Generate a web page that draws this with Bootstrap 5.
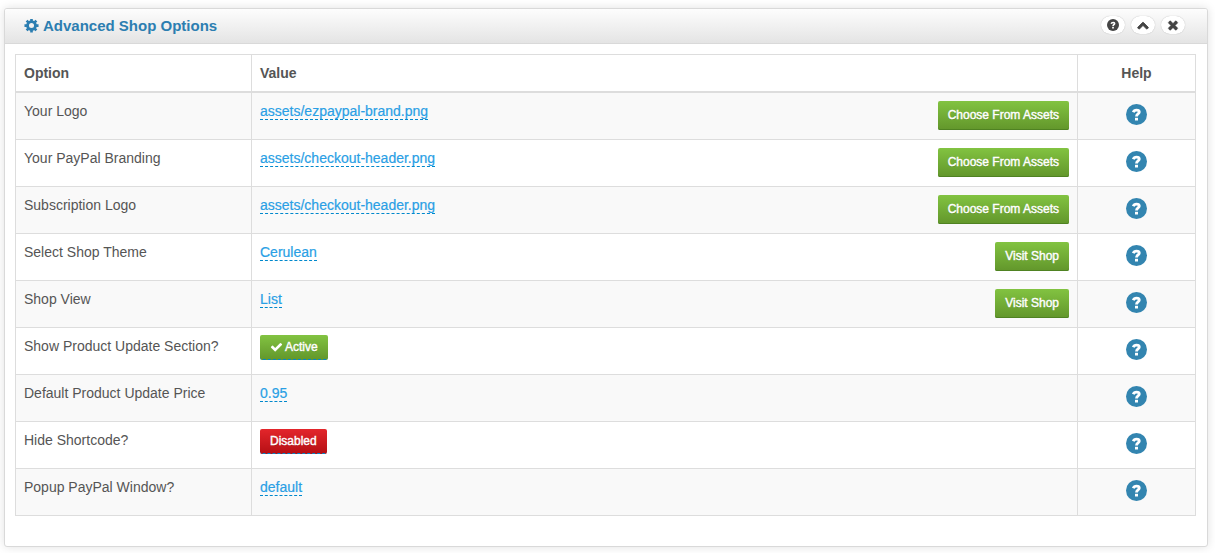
<!DOCTYPE html>
<html lang="en">
<head>
<meta charset="utf-8">
<meta name="viewport" content="width=device-width, initial-scale=1">
<title>Advanced Shop Options</title>
<link href="https://cdn.jsdelivr.net/npm/bootstrap@5.3.0/dist/css/bootstrap.min.css" rel="stylesheet">
<script src="https://cdn.jsdelivr.net/npm/bootstrap@5.3.0/dist/js/bootstrap.bundle.min.js" defer></script>
<style>
body { font-family: "Liberation Sans", Arial, sans-serif; font-size: 14px; line-height: 20px; color: #555; background: #fff; padding: 8px 7px 6px 4px; }
svg { fill: currentColor; display: block; }
.panel { --bs-card-border-color: #d9d9d9; --bs-card-border-radius: 3px; --bs-card-inner-border-radius: 2px; box-shadow: 0 0 10px rgba(0,0,0,.12); color: #555; }
.panel-head { background: linear-gradient(#fdfdfd, #e4e4e4); padding: 7px 22px 7px 19px; border-color: #d9d9d9; }
.panel-title { font-size: 15px; font-weight: bold; line-height: 20px; color: #2c7eb1; gap: 4px; }
.tools { gap: 6px; }
.tool { width: 24px; height: 18px; border: 0; border-radius: 9px; background: #fff; color: #444; padding: 0; box-shadow: 0 0 1px rgba(0,0,0,.3); }
.panel-main { padding: 10px 11px 30px 10px; }
.options { --bs-table-color: #555; --bs-table-striped-color: #555; --bs-table-striped-bg: #f9f9f9; border-color: #ddd; table-layout: fixed; }
.options > :not(caption) > * > * { padding: 8px; vertical-align: top; }
.options thead th { border-bottom-width: 2px; height: 37px; }
.options tbody td { height: 47px; }
.col-option { width: 20%; }
.col-help { width: 10%; }
.edit { color: #2a9fe5; text-decoration: none; border-bottom: 1px dashed #0088cc; line-height: 16px; margin-top: 2px; display: inline-block; -webkit-text-stroke: 0.2px #2a9fe5; }
.act { --bs-btn-font-size: 12px; --bs-btn-line-height: 19px; --bs-btn-border-radius: 2px; --bs-btn-border-width: 0; --bs-btn-padding-x: 10px; --bs-btn-padding-y: 5px; -webkit-text-stroke: 0.4px #fff; --bs-btn-color: #fff; --bs-btn-hover-color: #fff; text-shadow: 0 1px 0 rgba(0,0,0,.15); }
.act-green { background: linear-gradient(#82c341, #62962b); box-shadow: inset 0 -1px #4f8222; }
.act-red { background: linear-gradient(#e3262b, #b50f14); }
.act.state { --bs-btn-line-height: 20px; --bs-btn-padding-y: 2px; border-bottom: 1px dashed #0088cc; box-shadow: none; background-origin: border-box; gap: 2px; }
.state-row { margin-top: -1px; }
.help { border: 0; background: none; padding: 0; margin-top: 3px; color: #3385b0; }
</style>
</head>
<body>
<svg class="d-none">
<symbol id="i-help" viewBox="0 0 21 21"><circle cx="10.500" cy="10.500" r="10.500"/><path d="M7.300 8.200C8.200 5.400 13.300 5.400 13.300 8C13.300 10 10.500 10 10.500 12.500" fill="none" stroke="#fff" stroke-width="2.800"/><path d="M9 13.800h3v2.700h-3z" fill="#fff"/></symbol>
<symbol id="i-up" viewBox="0 0 1792 1792"><path d="M1683 1331l-166 165q-19 19-45 19t-45-19l-531-531-531 531q-19 19-45 19t-45-19l-166-165q-19-19-19-45.500t19-45.500l742-741q19-19 45-19t45 19l742 741q19 19 19 45.500t-19 45.500z" stroke="currentColor" stroke-width="120"/></symbol>
<symbol id="i-close" viewBox="0 0 1792 1792"><path d="M1490 1322q0 40-28 68l-136 136q-28 28-68 28t-68-28l-294-294-294 294q-28 28-68 28t-68-28l-136-136q-28-28-28-68t28-68l294-294-294-294q-28-28-28-68t28-68l136-136q28-28 68-28t68 28l294 294 294-294q28-28 68-28t68 28l136 136q28 28 28 68t-28 68l-294 294 294 294q28 28 28 68z" stroke="currentColor" stroke-width="60"/></symbol>
<symbol id="i-check" viewBox="0 0 1792 1792"><path d="M1671 566q0 40-28 68l-724 724-136 136q-28 28-68 28t-68-28l-136-136-362-362q-28-28-28-68t28-68l136-136q28-28 68-28t68 28l294 295 656-657q28-28 68-28t68 28l136 136q28 28 28 68z"/></symbol>
</svg>
<section class="card panel">
  <header class="card-header panel-head d-flex justify-content-between align-items-start">
    <h1 class="panel-title d-flex align-items-center m-0">
      <svg width="15" height="15" viewBox="-8 -7 16 16"><circle r="4.200" fill="none" stroke="currentColor" stroke-width="3"/><g stroke="currentColor" stroke-width="2.800"><path d="M0-7.500V-4.500M0 7.500V4.500M-7.500 0H-4.500M7.500 0H4.500M-5.200-5.200L-3.400-3.400M5.200 5.200L3.400 3.400M-5.200 5.200L-3.400 3.400M5.200-5.200L3.400-3.400"/></g></svg>
      Advanced Shop Options</h1>
    <div class="d-flex tools">
      <button type="button" class="tool d-flex align-items-center justify-content-center" aria-label="Help"><svg width="12" height="12"><use href="#i-help"/></svg></button>
      <button type="button" class="tool d-flex align-items-center justify-content-center" aria-label="Collapse"><svg width="12" height="12"><use href="#i-up"/></svg></button>
      <button type="button" class="tool d-flex align-items-center justify-content-center" aria-label="Close"><svg width="14" height="14"><use href="#i-close"/></svg></button>
    </div>
  </header>
  <div class="panel-main">
    <table class="table table-bordered table-striped options m-0">
      <thead><tr><th class="col-option">Option</th><th>Value</th><th class="col-help text-center">Help</th></tr></thead>
      <tbody>
        <tr><td>Your Logo</td><td><div class="d-flex justify-content-between align-items-start"><a class="edit" href="#">assets/ezpaypal-brand.png</a><button type="button" class="btn act act-green">Choose From Assets</button></div></td><td><button type="button" class="help d-block mx-auto" aria-label="Help"><svg width="21" height="21"><use href="#i-help"/></svg></button></td></tr>
        <tr><td>Your PayPal Branding</td><td><div class="d-flex justify-content-between align-items-start"><a class="edit" href="#">assets/checkout-header.png</a><button type="button" class="btn act act-green">Choose From Assets</button></div></td><td><button type="button" class="help d-block mx-auto" aria-label="Help"><svg width="21" height="21"><use href="#i-help"/></svg></button></td></tr>
        <tr><td>Subscription Logo</td><td><div class="d-flex justify-content-between align-items-start"><a class="edit" href="#">assets/checkout-header.png</a><button type="button" class="btn act act-green">Choose From Assets</button></div></td><td><button type="button" class="help d-block mx-auto" aria-label="Help"><svg width="21" height="21"><use href="#i-help"/></svg></button></td></tr>
        <tr><td>Select Shop Theme</td><td><div class="d-flex justify-content-between align-items-start"><a class="edit" href="#">Cerulean</a><button type="button" class="btn act act-green">Visit Shop</button></div></td><td><button type="button" class="help d-block mx-auto" aria-label="Help"><svg width="21" height="21"><use href="#i-help"/></svg></button></td></tr>
        <tr><td>Shop View</td><td><div class="d-flex justify-content-between align-items-start"><a class="edit" href="#">List</a><button type="button" class="btn act act-green">Visit Shop</button></div></td><td><button type="button" class="help d-block mx-auto" aria-label="Help"><svg width="21" height="21"><use href="#i-help"/></svg></button></td></tr>
        <tr><td>Show Product Update Section?</td><td><div class="d-flex state-row"><button type="button" class="btn act act-green state d-flex align-items-center"><svg width="13" height="14"><use href="#i-check"/></svg>Active</button></div></td><td><button type="button" class="help d-block mx-auto" aria-label="Help"><svg width="21" height="21"><use href="#i-help"/></svg></button></td></tr>
        <tr><td>Default Product Update Price</td><td><div class="d-flex"><a class="edit" href="#">0.95</a></div></td><td><button type="button" class="help d-block mx-auto" aria-label="Help"><svg width="21" height="21"><use href="#i-help"/></svg></button></td></tr>
        <tr><td>Hide Shortcode?</td><td><div class="d-flex state-row"><button type="button" class="btn act act-red state">Disabled</button></div></td><td><button type="button" class="help d-block mx-auto" aria-label="Help"><svg width="21" height="21"><use href="#i-help"/></svg></button></td></tr>
        <tr><td>Popup PayPal Window?</td><td><div class="d-flex"><a class="edit" href="#">default</a></div></td><td><button type="button" class="help d-block mx-auto" aria-label="Help"><svg width="21" height="21"><use href="#i-help"/></svg></button></td></tr>
      </tbody>
    </table>
  </div>
</section>
</body>
</html>
